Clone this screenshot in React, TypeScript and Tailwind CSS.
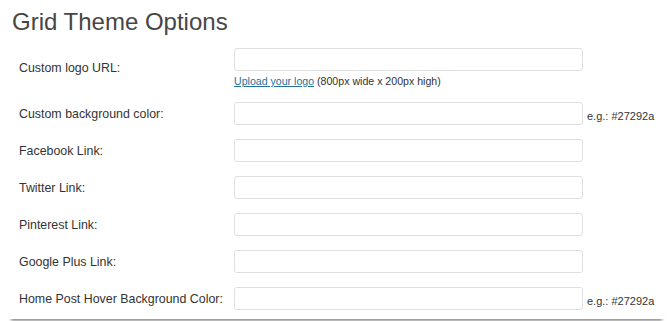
const rows = [
  { label: "Custom logo URL:", hint: true },
  { label: "Custom background color:", example: "e.g.: #27292a" },
  { label: "Facebook Link:" },
  { label: "Twitter Link:" },
  { label: "Pinterest Link:" },
  { label: "Google Plus Link:" },
  { label: "Home Post Hover Background Color:", example: "e.g.: #27292a" },
];

export default function App() {
  return (
    <div className="h-[321px] w-[671px] bg-white font-['Liberation_Sans',Arial,sans-serif] text-[#333]">
      <div className="ml-[8px] w-[657px] bg-white pb-[2px] shadow-[0_5px_3px_-3px_rgba(0,0,0,0.45)]">
        <h2 className="pl-[4px] pt-[7px] text-[24px] leading-[29px] font-normal text-[#464646]">
          Grid Theme Options
        </h2>
        <div className="mt-[5px] flex flex-col">
          {rows.map((row) => (
            <div key={row.label} className="flex items-center py-[7px]">
              <div className="w-[226px] pl-[11px] text-[12.4px] leading-[16px] text-[#333]">
                {row.label}
              </div>
              <div className="flex flex-col">
                <div className="flex items-center">
                  <input
                    type="text"
                    className="h-[23px] w-[349px] rounded-[3px] border border-[#dfdfdf] bg-white outline-none"
                  />
                  {row.example && (
                    <span className="ml-[4px] mt-[4px] text-[11px] leading-[14px] text-[#333]">
                      {row.example}
                    </span>
                  )}
                </div>
                {row.hint && (
                  <div className="mt-[3px] text-[10.6px] leading-[14px] text-[#333]">
                    <a href="#" className="text-[#21759b] underline">
                      Upload your logo
                    </a>{" "}
                    (800px wide x 200px high)
                  </div>
                )}
              </div>
            </div>
          ))}
        </div>
      </div>
    </div>
  );
}
